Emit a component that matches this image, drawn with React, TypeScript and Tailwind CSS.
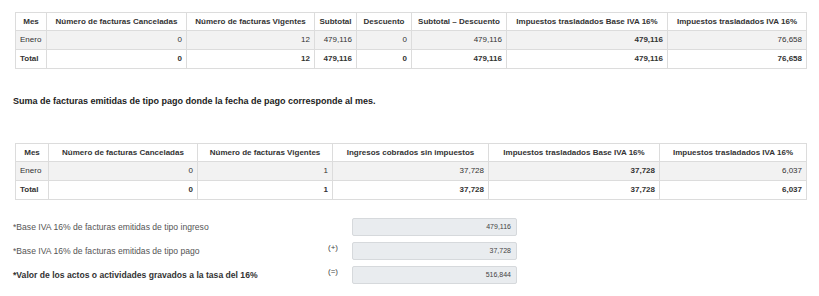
import React from "react";

const cell = "border border-[#dcdcdc] px-[4px]";

export default function App() {
  return (
    <div className="w-[819px] h-[296px] bg-white pl-[13px] pt-[12px] font-['Liberation_Sans',Arial,sans-serif] text-[#333]">
      <table className="ml-[2px] w-[791px] table-fixed border-collapse text-[8px]">
        <thead>
          <tr className="h-[18px] font-bold">
            <th className={`${cell} w-[31px] text-center`}>Mes</th>
            <th className={`${cell} w-[140px] text-center`}>Número de facturas Canceladas</th>
            <th className={`${cell} w-[128px] text-center`}>Número de facturas Vigentes</th>
            <th className={`${cell} w-[42px] text-center`}>Subtotal</th>
            <th className={`${cell} w-[55px] text-center`}>Descuento</th>
            <th className={`${cell} w-[95px] text-center`}>Subtotal – Descuento</th>
            <th className={`${cell} w-[161px] text-center`}>Impuestos trasladados Base IVA 16%</th>
            <th className={`${cell} w-[139px] text-center`}>Impuestos trasladados IVA 16%</th>
          </tr>
        </thead>
        <tbody>
          <tr className="h-[19px] bg-[#f2f2f2]">
            <td className={`${cell} text-left`}>Enero</td>
            <td className={`${cell} text-right`}>0</td>
            <td className={`${cell} text-right`}>12</td>
            <td className={`${cell} text-right`}>479,116</td>
            <td className={`${cell} text-right`}>0</td>
            <td className={`${cell} text-right`}>479,116</td>
            <td className={`${cell} text-right font-bold`}>479,116</td>
            <td className={`${cell} text-right`}>76,658</td>
          </tr>
          <tr className="h-[19px] bg-white font-bold">
            <td className={`${cell} text-left`}>Total</td>
            <td className={`${cell} text-right`}>0</td>
            <td className={`${cell} text-right`}>12</td>
            <td className={`${cell} text-right`}>479,116</td>
            <td className={`${cell} text-right`}>0</td>
            <td className={`${cell} text-right`}>479,116</td>
            <td className={`${cell} text-right`}>479,116</td>
            <td className={`${cell} text-right`}>76,658</td>
          </tr>
        </tbody>
      </table>

      <p className="mt-[26px] text-[9px] leading-[12px] font-bold text-[#222]">
        Suma de facturas emitidas de tipo pago donde la fecha de pago corresponde al mes.
      </p>

      <table className="mt-[36px] ml-[2px] w-[791px] table-fixed border-collapse text-[8px]">
        <thead>
          <tr className="h-[18px] font-bold">
            <th className={`${cell} w-[33px] text-center`}>Mes</th>
            <th className={`${cell} w-[149px] text-center`}>Número de facturas Canceladas</th>
            <th className={`${cell} w-[135px] text-center`}>Número de facturas Vigentes</th>
            <th className={`${cell} w-[156px] text-center`}>Ingresos cobrados sin impuestos</th>
            <th className={`${cell} w-[171px] text-center`}>Impuestos trasladados Base IVA 16%</th>
            <th className={`${cell} w-[147px] text-center`}>Impuestos trasladados IVA 16%</th>
          </tr>
        </thead>
        <tbody>
          <tr className="h-[19px] bg-[#f2f2f2]">
            <td className={`${cell} text-left`}>Enero</td>
            <td className={`${cell} text-right`}>0</td>
            <td className={`${cell} text-right`}>1</td>
            <td className={`${cell} text-right`}>37,728</td>
            <td className={`${cell} text-right font-bold`}>37,728</td>
            <td className={`${cell} text-right`}>6,037</td>
          </tr>
          <tr className="h-[19px] bg-white font-bold">
            <td className={`${cell} text-left`}>Total</td>
            <td className={`${cell} text-right`}>0</td>
            <td className={`${cell} text-right`}>1</td>
            <td className={`${cell} text-right`}>37,728</td>
            <td className={`${cell} text-right`}>37,728</td>
            <td className={`${cell} text-right`}>6,037</td>
          </tr>
        </tbody>
      </table>

      <div className="mt-[18px] flex flex-col gap-[6px] text-[8.6px]">
        {[
          { label: "*Base IVA 16% de facturas emitidas de tipo ingreso", sign: "", value: "479,116", strong: false },
          { label: "*Base IVA 16% de facturas emitidas de tipo pago", sign: "(+)", value: "37,728", strong: false },
          { label: "*Valor de los actos o actividades gravados a la tasa del 16%", sign: "(=)", value: "516,844", strong: true },
        ].map((r) => (
          <div key={r.label} className="flex h-[18px] items-center">
            <div className={`w-[315px] ${r.strong ? "font-bold text-[#333]" : "text-[#555]"}`}>{r.label}</div>
            <div className="w-[24px] self-start text-[8px] text-[#444]">{r.sign}</div>
            <div className="flex h-[18px] w-[165px] items-center justify-end rounded-[2px] border border-[#d6d9dc] bg-[#e9ecef] pr-[5px] text-[7px] text-[#444]">
              {r.value}
            </div>
          </div>
        ))}
      </div>
    </div>
  );
}
